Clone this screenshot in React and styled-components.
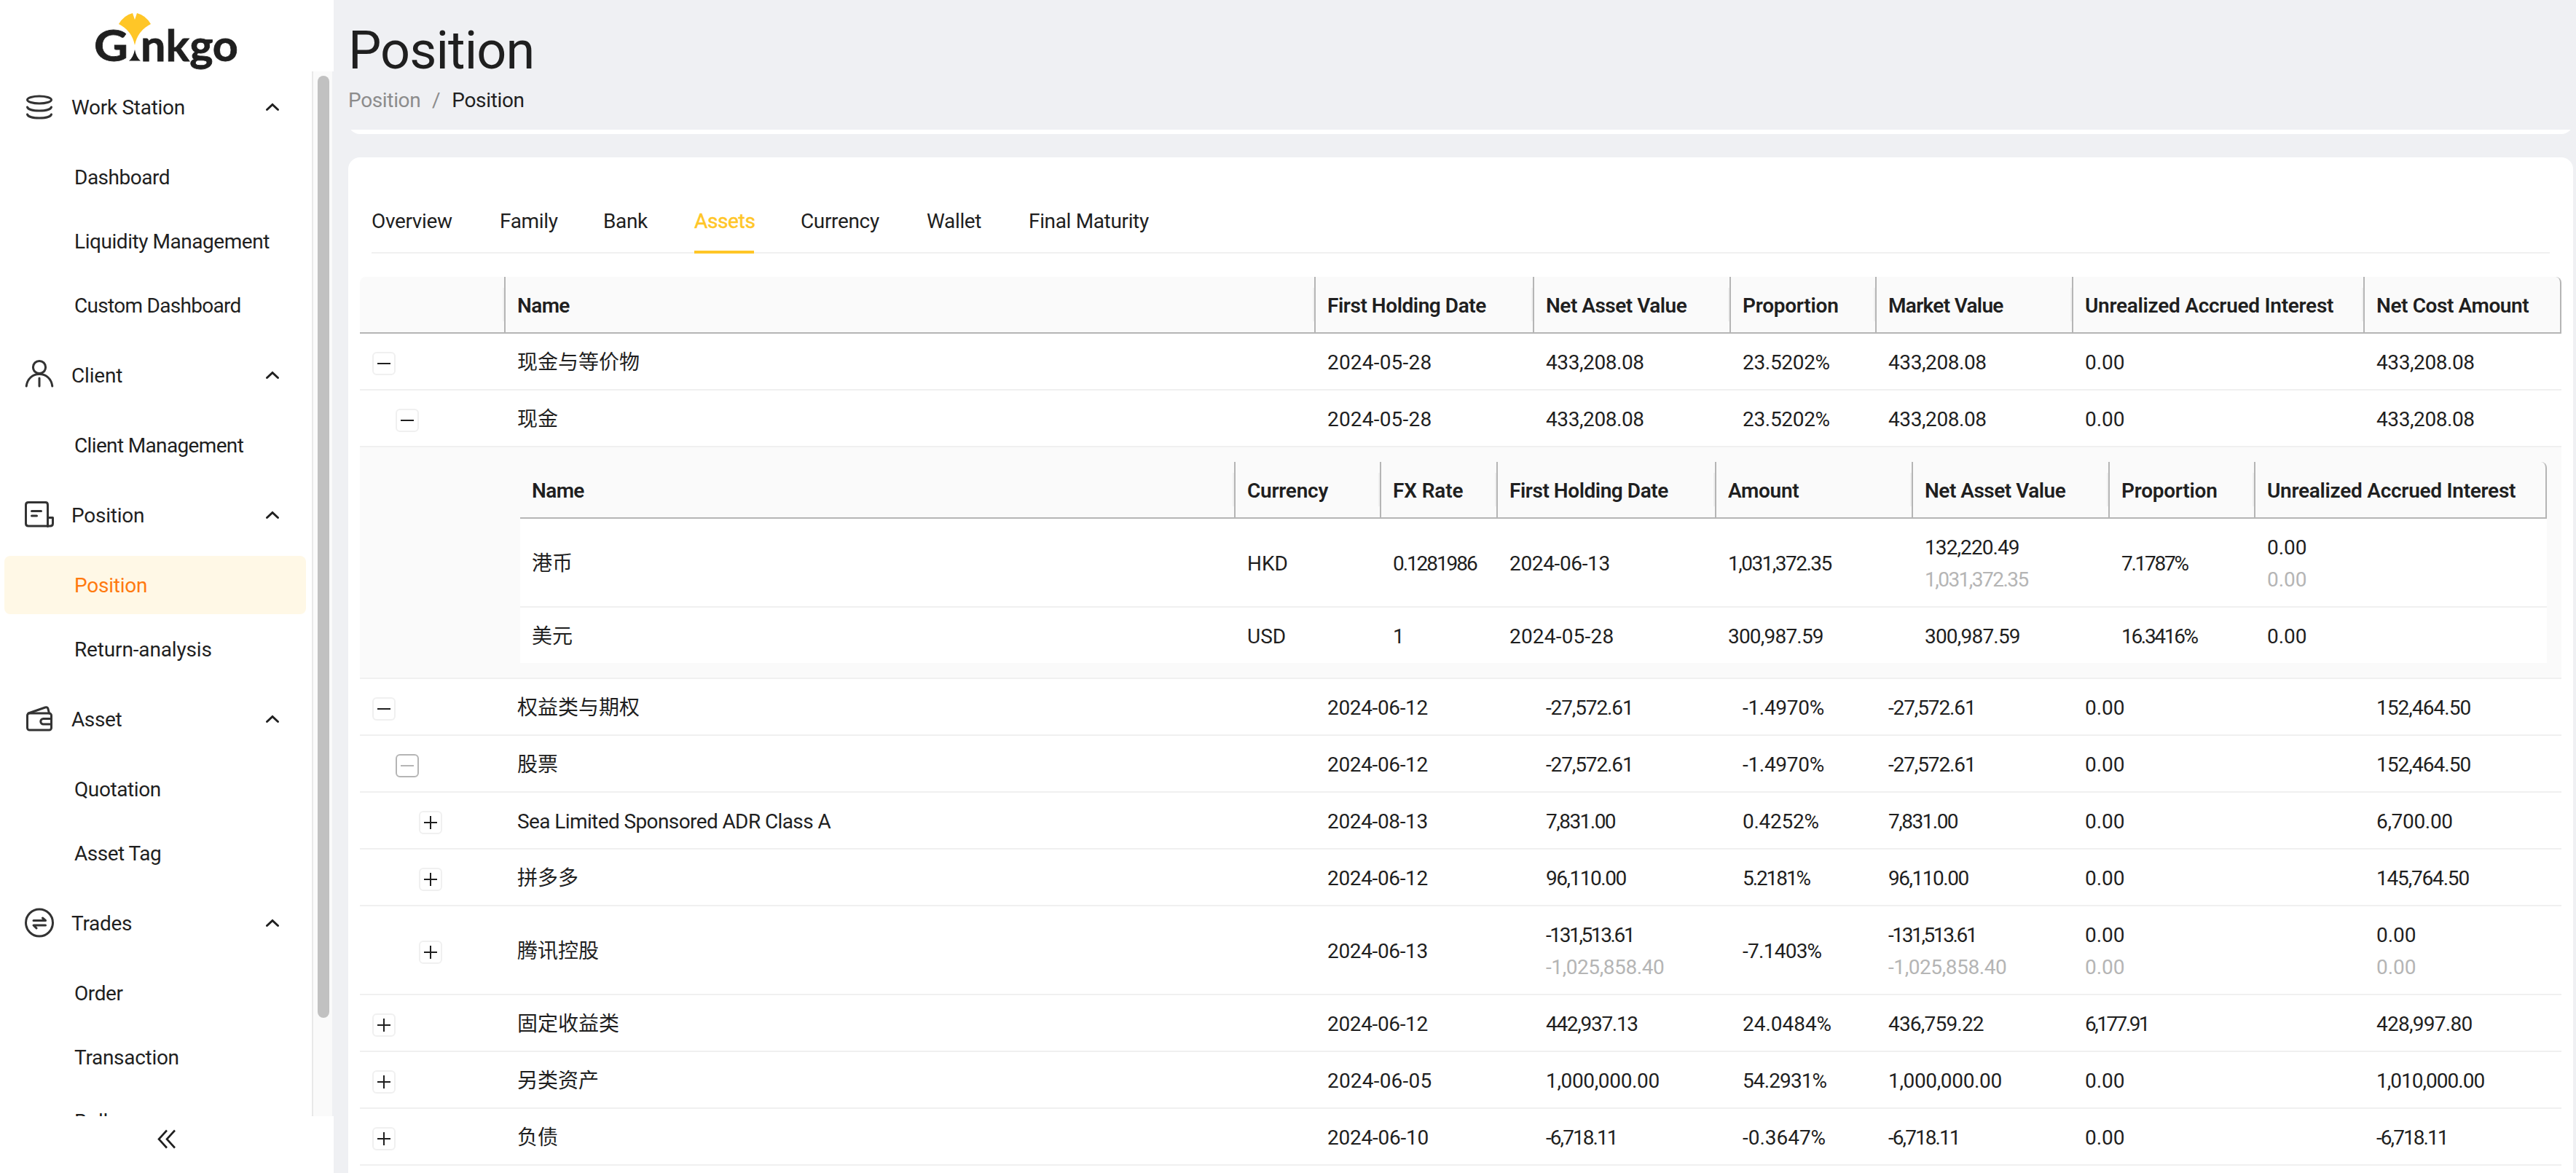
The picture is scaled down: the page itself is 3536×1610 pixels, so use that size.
import React from "react";
import styled, { createGlobalStyle } from "styled-components";

const GlobalStyle = createGlobalStyle`
  * {
    box-sizing: border-box;
  }
  body {
    margin: 0;
    background: #eff0f3;
    color: #1f1f1f;
    font-family: "Roboto", "Noto Sans CJK SC", sans-serif;
    font-size: 28px;
    line-height: 44px;
  }
`;

const Layout = styled.div`
  display: flex;
  width: 100vw;
  height: 100vh;
  overflow: hidden;
`;

/* ---------- sidebar ---------- */

const Sider = styled.aside`
  display: flex;
  flex-direction: column;
  flex: none;
  width: 458px;
`;

const LogoBox = styled.div`
  height: 98px;
  background: #fff;
  padding-left: 125px;

  svg {
    display: block;
  }
`;

const MenuScroll = styled.div`
  display: flex;
  flex: 1;
  min-height: 0;
  width: 456px;
  overflow: hidden;
  background: #fff;
`;

const Menu = styled.nav`
  flex: 1;
  padding: 5px 8px 0 6px;
`;

const ScrollTrack = styled.div`
  width: 28px;
  padding: 6px 4px 0 6px;
  background: #fafafa;
  border-left: 2px solid #e8e8e8;
`;

const ScrollThumb = styled.div`
  width: 16px;
  height: 1293px;
  border-radius: 8px;
  background: #c1c1c1;
`;

const GroupTitle = styled.div`
  display: flex;
  align-items: center;
  height: 80px;
  margin: 4px 0;
  padding: 0 36px 0 26px;
`;

const GroupIcon = styled.svg`
  width: 44px;
  height: 44px;
  margin-right: 22px;
  fill: none;
  stroke: #333;
  stroke-width: 3;
  stroke-linecap: round;
  stroke-linejoin: round;
`;

const Chevron = styled.svg`
  width: 20px;
  height: 12px;
  margin-left: auto;
  fill: none;
  stroke: #1f1f1f;
  stroke-width: 3;
  stroke-linecap: round;
`;

const SubMenu = styled.div`
  padding: 8px 0;
`;

const MenuItem = styled.div`
  display: flex;
  align-items: center;
  height: 80px;
  margin: ${(p) => (p.$first ? "4px 0" : "8px 0 4px")};
  padding-left: 96px;
  border-radius: 8px;
  color: ${(p) => (p.$active ? "#ff7a0f" : "inherit")};
  background: ${(p) => (p.$active ? "#fff8e6" : "transparent")};
`;

const Collapse = styled.div`
  display: flex;
  justify-content: center;
  height: 78px;
  padding-top: 18px;
  background: #fff;

  svg {
    width: 28px;
    height: 28px;
    fill: none;
    stroke: #1f1f1f;
    stroke-width: 2.6;
  }
`;

const Label = styled.span`
  padding-top: 1px;
  letter-spacing: ${(p) => p.$ls || 0}px;
  white-space: nowrap;
`;

/* ---------- page header ---------- */

const Main = styled.main`
  flex: 1;
  min-width: 0;
  padding: 0 4px 0 20px;
`;

const PageTitle = styled.h1`
  margin: 0;
  padding-top: 22px;
  height: 116px;
  font-size: 72px;
  line-height: 96px;
  font-weight: 400;
  letter-spacing: -0.9px;
`;

const Breadcrumb = styled.div`
  display: flex;
  height: 62px;
`;

const Crumb = styled.span`
  color: ${(p) => (p.$current ? "#1f1f1f" : "#8c8c8c")};
  letter-spacing: -0.35px;
`;

const Slash = styled.span`
  width: 43px;
  text-align: center;
  color: #8c8c8c;
`;

const StripClip = styled.div`
  display: flex;
  align-items: flex-end;
  height: 6px;
  margin-bottom: 32px;
  overflow: hidden;
`;

const Strip = styled.div`
  flex: 1;
  height: 40px;
  border-radius: 16px;
  background: #fff;
`;

const Card = styled.section`
  height: 1500px;
  padding: 44px 16px 0;
  border-radius: 16px;
  background: #fff;
`;

const Tabs = styled.div`
  display: flex;
  gap: 64px;
  height: 88px;
  margin: 0 16px 32px;
  border-bottom: 2px solid #f0f0f0;
`;

const Tab = styled.div`
  width: ${(p) => p.$w}px;
  height: 88px;
  padding-top: 22px;
  white-space: nowrap;
  letter-spacing: -0.35px;
  color: ${(p) => (p.$active ? "#ffc627" : "inherit")};
  border-bottom: ${(p) => (p.$active ? "4px solid #ffc627" : "none")};
  -webkit-text-stroke: ${(p) => (p.$active ? "0.5px #ffc627" : "0")};
`;

/* ---------- tables ---------- */

const MAIN_COLS = "200px 1112px 300px 270px 200px 270px 400px 270px";
const SUB_COLS = "982px 200px 160px 300px 270px 270px 200px 400px";

const HeadRow = styled.div`
  display: grid;
  grid-template-columns: ${(p) => p.$cols};
  height: 78px;
  background: #fafafa;
  border-bottom: 2px solid #b5b5b5;
  border-radius: 8px 8px 0 0;
`;

const HeadCell = styled.div`
  position: relative;
  padding: 18px 16px 0;
  font-weight: 600;
  white-space: nowrap;
  letter-spacing: ${(p) => p.$ls}px;
  border-right: 2px solid #b5b5b5;

  &:last-child {
    border-top-right-radius: 8px;
  }
  &:not(:last-child)::after {
    content: "";
    position: absolute;
    top: 15px;
    right: 0;
    width: 2px;
    height: 46px;
    background: #f0f0f0;
  }
`;

const Row = styled.div`
  display: grid;
  grid-template-columns: ${(p) => p.$cols};
  align-items: center;
  height: ${(p) => (p.$tall ? 122 : 78)}px;
  background: #fff;
  border-bottom: 2px solid #f0f0f0;

  &:last-child {
    ${(p) => p.$flush && "height: 76px; border-bottom: none;"}
  }
`;

const Cell = styled.div`
  padding: 4px 0 0 16px;
  white-space: nowrap;
`;

const Line = styled.div`
  height: 44px;
  letter-spacing: ${(p) => p.$ls}px;
  color: ${(p) => (p.$dim ? "#b5b5b5" : "inherit")};
`;

const ToggleCell = styled.div`
  padding: 6px 0 0 ${(p) => 17 + p.$level * 32}px;
`;

const Toggle = styled.button`
  display: flex;
  align-items: center;
  justify-content: center;
  width: 32px;
  height: 32px;
  padding: 0;
  background: #fff;
  border: 2px solid ${(p) => (p.$hover ? "#b5b5b5" : "#f0f0f0")};
  border-radius: 6px;
  color: ${(p) => (p.$hover ? "#b5b5b5" : "#1f1f1f")};

  svg {
    width: 18px;
    height: 18px;
    stroke: currentColor;
    stroke-width: 2;
  }
`;

const Expanded = styled.div`
  height: 318px;
  padding: 20px 20px 0 220px;
  background: #fafafa;
  border-bottom: 2px solid #f0f0f0;
`;

// set width of each figure, in px
const figureWidths = {
  "2024-05-28": 142,
  "2024-06-13": 137,
  "2024-06-12": 137,
  "2024-08-13": 137,
  "2024-06-05": 142,
  "2024-06-10": 138,
  "433,208.08": 134,
  "23.5202%": 119,
  "0.00": 53.5,
  "0.1281986": 115.5,
  "1,031,372.35": 142,
  "300,987.59": 130.5,
  "132,220.49": 129.5,
  "7.1787%": 92,
  "16.3416%": 105,
  "-27,572.61": 119.5,
  "-1.4970%": 111,
  "152,464.50": 129,
  "7,831.00": 95.5,
  "0.4252%": 104,
  "6,700.00": 104,
  "96,110.00": 110,
  "5.2181%": 93,
  "145,764.50": 127,
  "-131,513.61": 121.5,
  "-1,025,858.40": 161.5,
  "-7.1403%": 108,
  "442,937.13": 126,
  "24.0484%": 121,
  "436,759.22": 130.5,
  "6,177.91": 88.5,
  "428,997.80": 131,
  "1,000,000.00": 155,
  "54.2931%": 115,
  "1,010,000.00": 148,
  "-6,718.11": 98.5,
  "-0.3647%": 113,
};

const glyphs = { ",": 5.5, ".": 7.4, "-": 7.7, "%": 20.5 };

const tracking = (text) => {
  const target = figureWidths[text];
  if (!target) return text.startsWith("Sea") ? -0.6 : 0;
  const natural = [...text].reduce((sum, ch) => sum + (glyphs[ch] || 15.72), 0);
  return ((target + 1 - natural) / (text.length - 1)).toFixed(2);
};

const icons = {
  station: (
    <>
      <ellipse cx="22" cy="12" rx="16.5" ry="5" />
      <path d="M5.5 22c1 3.2 8 5 16.5 5s15.5-1.8 16.5-5" />
      <path d="M5.5 32c1 3.2 8 5 16.5 5s15.5-1.8 16.5-5" />
    </>
  ),
  client: (
    <>
      <circle cx="22" cy="11" r="8.6" />
      <path d="M4.2 37C5.5 27 12.5 20.5 22 20.5S38.5 27 39.8 37" />
      <path d="M22 26v11" />
    </>
  ),
  position: (
    <>
      <path d="M33.5 37H7q-3.5 0-3.5-3.5V8q0-3.5 3.5-3.5h23.5q3 0 3 3.5v29.5" />
      <path d="M33.5 25.5h7v8q0 3.5-3.5 3.5h-3.5" />
      <path d="M11.5 16.5h13M11.5 23h7" />
    </>
  ),
  asset: (
    <>
      <rect x="5.5" y="14" width="33" height="23" rx="3" />
      <path d="M7 14l23-8q3-1 4 2l1.5 6" />
      <path d="M38 21.5H27.5a3.7 3.7 0 0 0 0 7.4H38" />
    </>
  ),
  trades: (
    <>
      <circle cx="22" cy="21.5" r="18.5" />
      <path d="M14 18.5h16.5l-4-3.5M30.5 25H14l4 4" />
    </>
  ),
};

const menu = [
  {
    title: "Work Station",
    ls: -0.3,
    icon: "station",
    items: [
      { label: "Dashboard", ls: -0.5 },
      { label: "Liquidity Management", ls: -0.45 },
      { label: "Custom Dashboard", ls: -0.7 },
    ],
  },
  {
    title: "Client",
    ls: -0.2,
    icon: "client",
    items: [{ label: "Client Management", ls: -0.65 }],
  },
  {
    title: "Position",
    ls: -0.25,
    icon: "position",
    items: [
      { label: "Position", ls: -0.25, active: true },
      { label: "Return-analysis", ls: -0.15 },
    ],
  },
  {
    title: "Asset",
    ls: -0.4,
    icon: "asset",
    items: [
      { label: "Quotation", ls: -0.4 },
      { label: "Asset Tag", ls: -0.5 },
    ],
  },
  {
    title: "Trades",
    ls: -0.3,
    icon: "trades",
    items: [
      { label: "Order", ls: -0.4 },
      { label: "Transaction", ls: -0.3 },
      { label: "Bulk", ls: 0 },
    ],
  },
];

const tabs = [
  { label: "Overview", w: 112 },
  { label: "Family", w: 78 },
  { label: "Bank", w: 61 },
  { label: "Assets", w: 82 },
  { label: "Currency", w: 109 },
  { label: "Wallet", w: 76 },
  { label: "Final Maturity", w: 164 },
];

const headTracking = {
  Name: -0.6,
  "First Holding Date": -0.44,
  "Net Asset Value": -0.5,
  Proportion: -0.25,
  "Market Value": -0.7,
  "Unrealized Accrued Interest": -0.27,
  "Net Cost Amount": -0.4,
  Currency: -0.25,
  "FX Rate": -0.15,
  Amount: -0.3,
};

const mainHead = [
  "",
  "Name",
  "First Holding Date",
  "Net Asset Value",
  "Proportion",
  "Market Value",
  "Unrealized Accrued Interest",
  "Net Cost Amount",
];

const subHead = [
  "Name",
  "Currency",
  "FX Rate",
  "First Holding Date",
  "Amount",
  "Net Asset Value",
  "Proportion",
  "Unrealized Accrued Interest",
];

const subRows = [
  [
    "港币",
    "HKD",
    "0.1281986",
    "2024-06-13",
    "1,031,372.35",
    ["132,220.49", "1,031,372.35"],
    "7.1787%",
    ["0.00", "0.00"],
  ],
  ["美元", "USD", "1", "2024-05-28", "300,987.59", "300,987.59", "16.3416%", "0.00"],
];

const rows = [
  {
    level: 0,
    open: true,
    cells: ["现金与等价物", "2024-05-28", "433,208.08", "23.5202%", "433,208.08", "0.00", "433,208.08"],
  },
  {
    level: 1,
    open: true,
    detail: subRows,
    cells: ["现金", "2024-05-28", "433,208.08", "23.5202%", "433,208.08", "0.00", "433,208.08"],
  },
  {
    level: 0,
    open: true,
    cells: ["权益类与期权", "2024-06-12", "-27,572.61", "-1.4970%", "-27,572.61", "0.00", "152,464.50"],
  },
  {
    level: 1,
    open: true,
    hover: true,
    cells: ["股票", "2024-06-12", "-27,572.61", "-1.4970%", "-27,572.61", "0.00", "152,464.50"],
  },
  {
    level: 2,
    cells: ["Sea Limited Sponsored ADR Class A", "2024-08-13", "7,831.00", "0.4252%", "7,831.00", "0.00", "6,700.00"],
  },
  {
    level: 2,
    cells: ["拼多多", "2024-06-12", "96,110.00", "5.2181%", "96,110.00", "0.00", "145,764.50"],
  },
  {
    level: 2,
    cells: [
      "腾讯控股",
      "2024-06-13",
      ["-131,513.61", "-1,025,858.40"],
      "-7.1403%",
      ["-131,513.61", "-1,025,858.40"],
      ["0.00", "0.00"],
      ["0.00", "0.00"],
    ],
  },
  {
    level: 0,
    cells: ["固定收益类", "2024-06-12", "442,937.13", "24.0484%", "436,759.22", "6,177.91", "428,997.80"],
  },
  {
    level: 0,
    cells: ["另类资产", "2024-06-05", "1,000,000.00", "54.2931%", "1,000,000.00", "0.00", "1,010,000.00"],
  },
  {
    level: 0,
    cells: ["负债", "2024-06-10", "-6,718.11", "-0.3647%", "-6,718.11", "0.00", "-6,718.11"],
  },
];

const Logo = () => (
  <svg width="210" height="98" viewBox="125 0 210 98">
    <g
      fill="#1f1f1f"
      stroke="#1f1f1f"
      strokeWidth="0.8"
      fontFamily="Lato"
      fontWeight="700"
      fontSize="60"
    >
      <text x="129" y="84" textLength="47" lengthAdjust="spacingAndGlyphs">
        G
      </text>
      <text x="193" y="84" textLength="134" lengthAdjust="spacingAndGlyphs">
        nkgo
      </text>
    </g>
    <path
      d="M163 33Q170 21 182 18L185 27L188 18Q200 21 207 33Q189 42 185 62Q181 42 163 33Z"
      fill="#ffc627"
    />
    <path d="M185 68Q187 79 193 83.5H177Q183 79 185 68Z" fill="#1f1f1f" />
  </svg>
);

const Sidebar = () => (
  <Sider>
    <LogoBox>
      <Logo />
    </LogoBox>
    <MenuScroll>
      <Menu>
        {menu.map((group) => (
          <React.Fragment key={group.title}>
            <GroupTitle>
              <GroupIcon viewBox="0 0 44 44">{icons[group.icon]}</GroupIcon>
              <Label $ls={group.ls}>{group.title}</Label>
              <Chevron viewBox="0 0 20 12">
                <path d="M2.5 9.5L10 2.5L17.5 9.5" />
              </Chevron>
            </GroupTitle>
            <SubMenu>
              {group.items.map((item, i) => (
                <MenuItem key={item.label} $first={i === 0} $active={item.active}>
                  <Label $ls={item.ls}>{item.label}</Label>
                </MenuItem>
              ))}
            </SubMenu>
          </React.Fragment>
        ))}
      </Menu>
      <ScrollTrack>
        <ScrollThumb />
      </ScrollTrack>
    </MenuScroll>
    <Collapse>
      <svg viewBox="0 0 28 28">
        <path d="M14 1.5L3 13.5L14 25.5M25 1.5L14 13.5L25 25.5" />
      </svg>
    </Collapse>
  </Sider>
);

const DataCell = ({ value }) => {
  const lines = Array.isArray(value) ? value : [value];
  return (
    <Cell>
      {lines.map((line, i) => (
        <Line key={i} $dim={i > 0} $ls={tracking(line)}>
          {line}
        </Line>
      ))}
    </Cell>
  );
};

const TableHead = ({ cols, labels }) => (
  <HeadRow $cols={cols}>
    {labels.map((label) => (
      <HeadCell key={label} $ls={headTracking[label] || 0}>
        {label}
      </HeadCell>
    ))}
  </HeadRow>
);

const DetailTable = ({ data }) => (
  <Expanded>
    <TableHead cols={SUB_COLS} labels={subHead} />
    {data.map((cells) => (
      <Row key={cells[0]} $cols={SUB_COLS} $tall={cells.some(Array.isArray)} $flush>
        {cells.map((value, i) => (
          <DataCell key={i} value={value} />
        ))}
      </Row>
    ))}
  </Expanded>
);

const AssetsTable = () => (
  <div>
    <TableHead cols={MAIN_COLS} labels={mainHead} />
    {rows.map((row) => (
      <React.Fragment key={row.cells[0]}>
        <Row $cols={MAIN_COLS} $tall={row.cells.some(Array.isArray)}>
          <ToggleCell $level={row.level}>
            <Toggle $hover={row.hover}>
              <svg viewBox="0 0 18 18">
                <path d={row.open ? "M0 9h18" : "M0 9h18M9 0v18"} />
              </svg>
            </Toggle>
          </ToggleCell>
          {row.cells.map((value, i) => (
            <DataCell key={i} value={value} />
          ))}
        </Row>
        {row.detail && <DetailTable data={row.detail} />}
      </React.Fragment>
    ))}
  </div>
);

const App = () => {
  return (
    <>
      <GlobalStyle />
      <Layout>
        <Sidebar />
        <Main>
          <PageTitle>Position</PageTitle>
          <Breadcrumb>
            <Crumb>Position</Crumb>
            <Slash>/</Slash>
            <Crumb $current>Position</Crumb>
          </Breadcrumb>
          <StripClip>
            <Strip />
          </StripClip>
          <Card>
            <Tabs>
              {tabs.map((tab) => (
                <Tab key={tab.label} $w={tab.w} $active={tab.label === "Assets"}>
                  {tab.label}
                </Tab>
              ))}
            </Tabs>
            <AssetsTable />
          </Card>
        </Main>
      </Layout>
    </>
  );
};

export default App;
